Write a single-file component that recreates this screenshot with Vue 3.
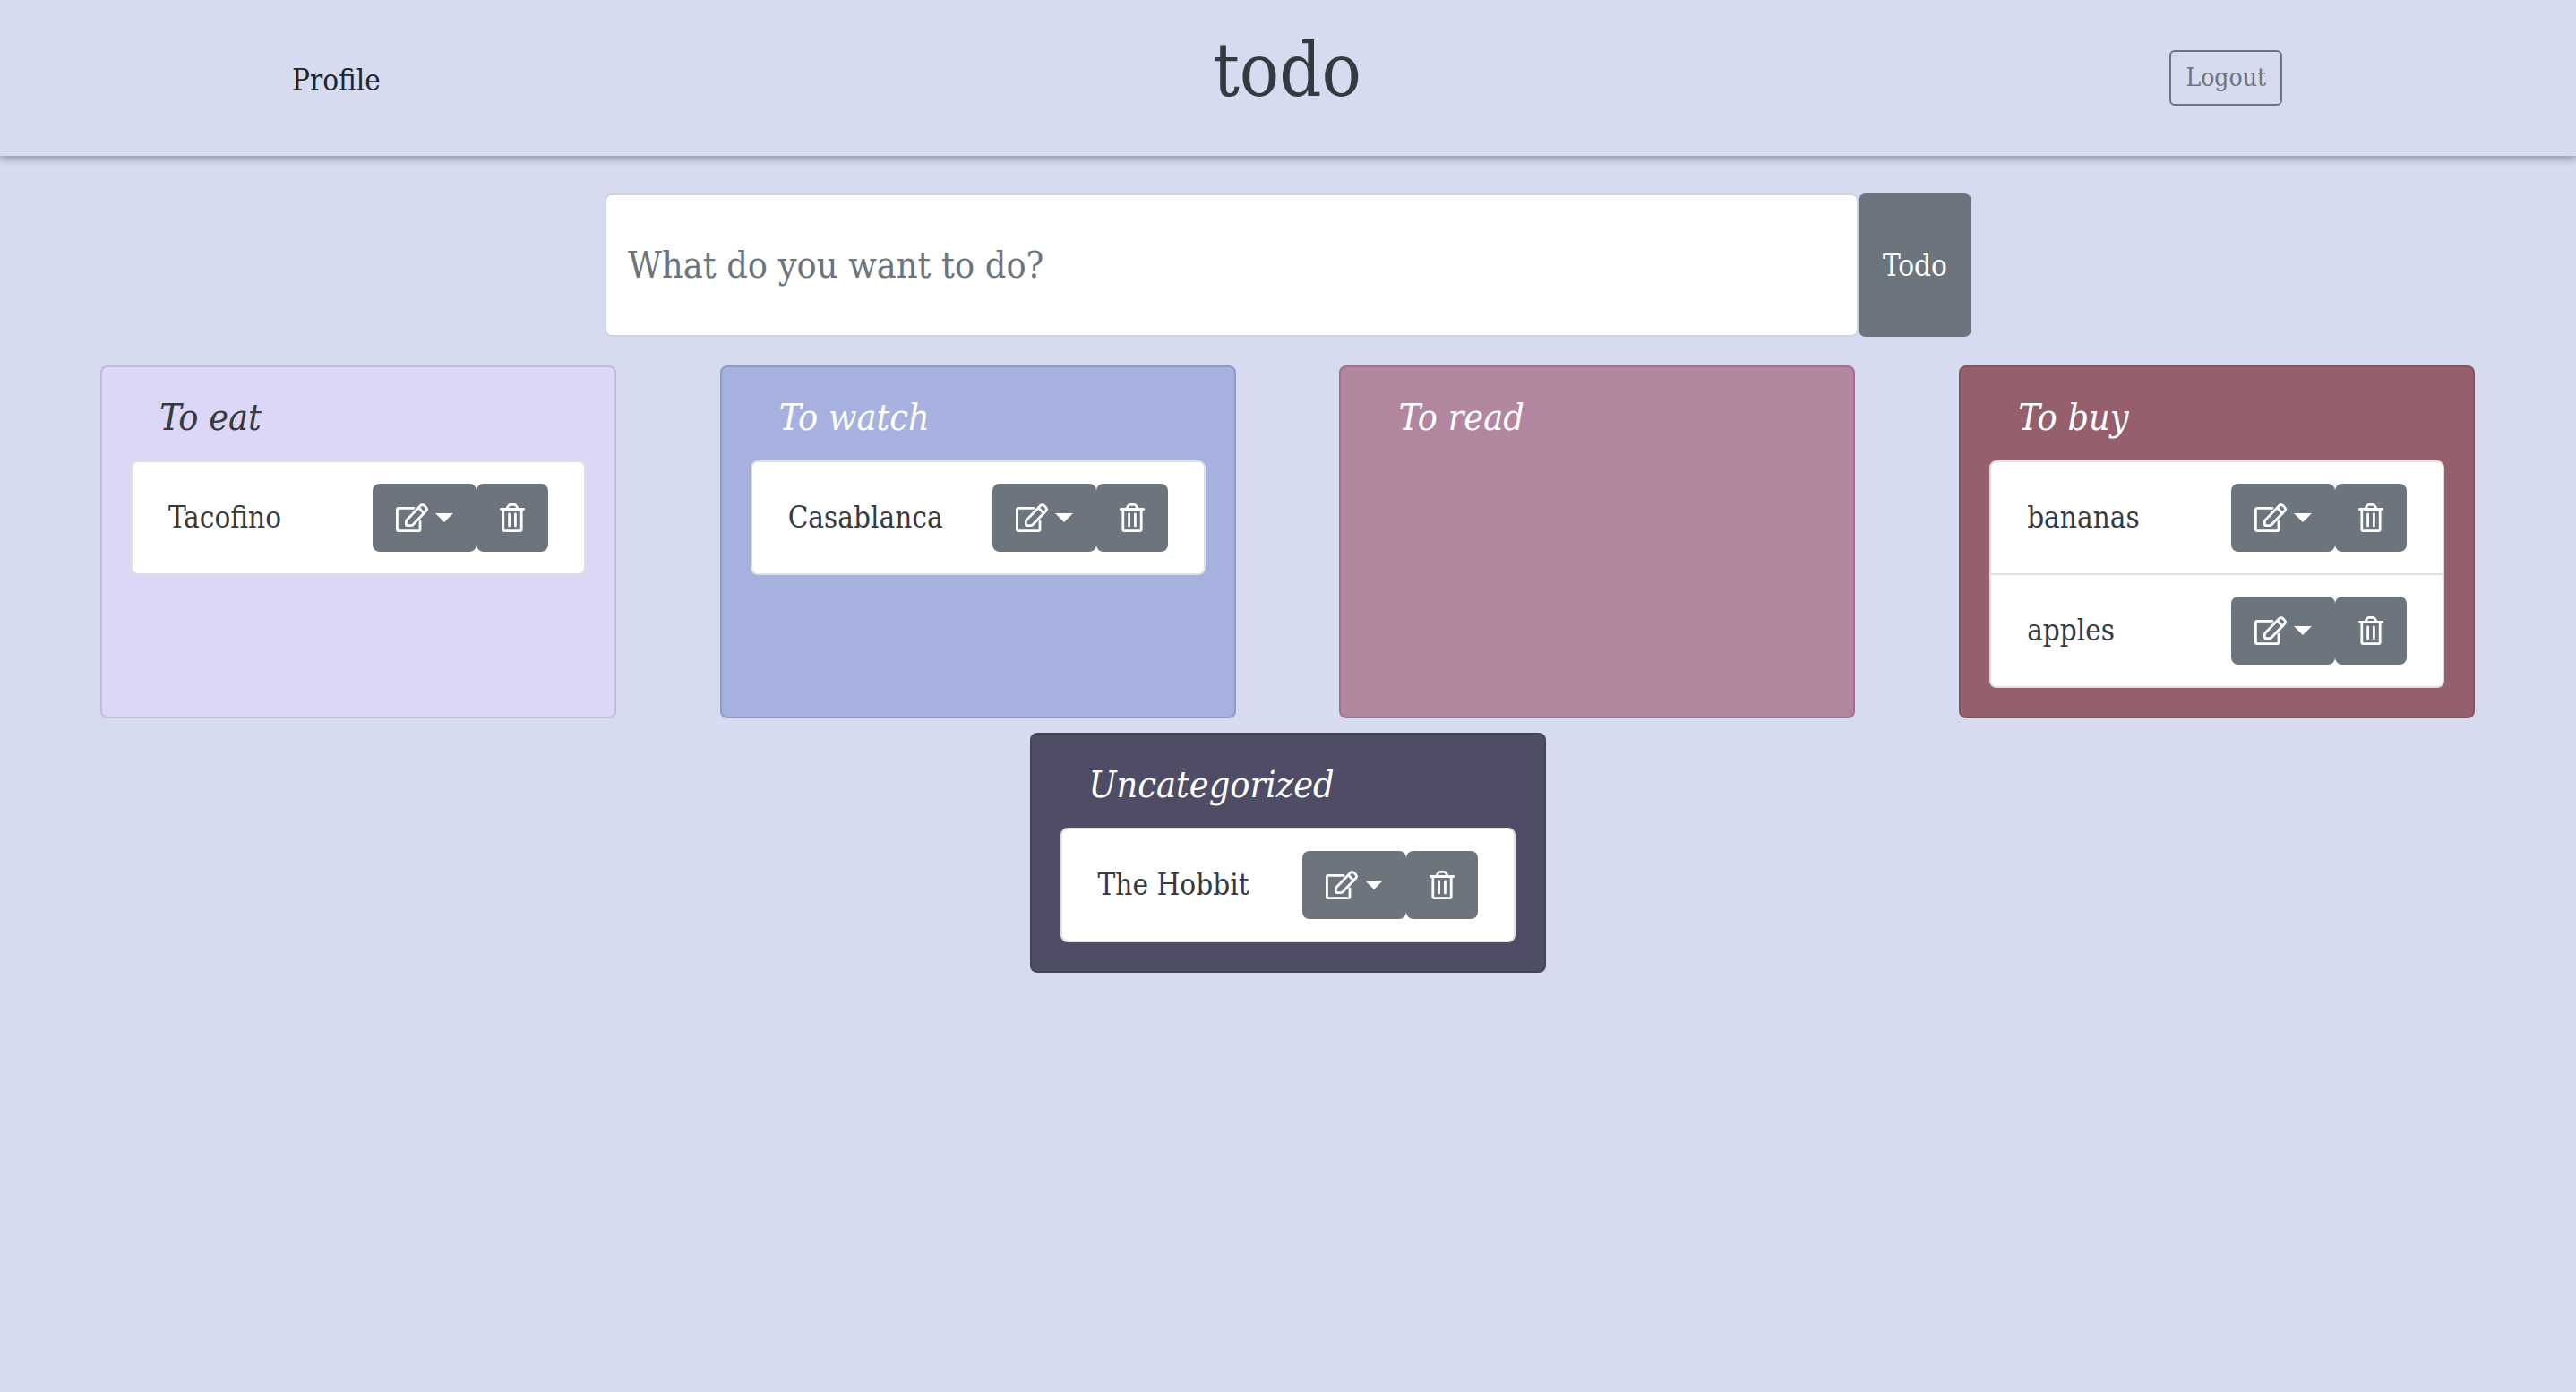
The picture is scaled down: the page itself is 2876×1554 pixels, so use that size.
<script setup>
import { ref } from 'vue'

const draft = ref('')

const categories = ref([
  { id: 'eat', title: 'To eat', items: ['Tacofino'] },
  { id: 'watch', title: 'To watch', items: ['Casablanca'] },
  { id: 'read', title: 'To read', items: [] },
  { id: 'buy', title: 'To buy', items: ['bananas', 'apples'] },
  { id: 'other', title: 'Uncategorized', items: ['The Hobbit'] },
])

function addTodo() {
  const text = draft.value.trim()
  if (!text) return
  categories.value[4].items.push(text)
  draft.value = ''
}

function removeTodo(category, index) {
  category.items.splice(index, 1)
}
</script>

<template>
  <div class="page">
    <header class="top-bar">
      <a class="profile" href="#profile">Profile</a>
      <h1 class="brand">todo</h1>
      <button class="logout" type="button">Logout</button>
    </header>

    <main>
      <form class="new-todo" @submit.prevent="addTodo">
        <input
          v-model="draft"
          class="new-todo-input"
          type="text"
          aria-label="New todo"
          placeholder="What do you want to do?"
        />
        <button class="new-todo-button" type="submit">Todo</button>
      </form>

      <div class="board">
        <section
          v-for="category in categories"
          :key="category.id"
          class="card"
          :class="category.id"
        >
          <h2 class="card-title">{{ category.title }}</h2>
          <ul v-if="category.items.length" class="list">
            <li v-for="(item, index) in category.items" :key="item" class="item">
              <span>{{ item }}</span>
              <div class="actions">
                <button class="action" type="button" :aria-label="'Edit ' + item">
                  <svg width="36" height="32" viewBox="0 0 36 32" class="icon">
                    <path d="M20 5.4H3Q1.4 5.4 1.4 7V29Q1.4 30.6 3 30.6H25.4Q27 30.6 27 29V20" />
                    <path d="M11.9 18.8 27.6 2.5Q29.8.5 31.9 2.6L33.6 4.4Q35.5 6.5 33.6 8.5L19 23.8Q18 24.6 16.6 24.6H12.7Q11.4 24.6 11.4 23.3V20.4Q11.4 19.4 11.9 18.8Z" />
                    <path d="M25.5 5 31.4 11.2" />
                  </svg>
                  <span class="caret"></span>
                </button>
                <button
                  class="action"
                  type="button"
                  :aria-label="'Delete ' + item"
                  @click="removeTodo(category, index)"
                >
                  <svg width="28" height="32" viewBox="0 0 28 32" class="icon">
                    <path d="M1.4 6.5H26.6" />
                    <path d="M7.8 6 9.7 2.6Q10.4 1.4 11.7 1.4H16.3Q17.6 1.4 18.3 2.6L20.2 6" />
                    <path d="M3.8 6.5V29Q3.8 30.6 5.4 30.6H22.6Q24.2 30.6 24.2 29V6.5" />
                    <path d="M10.6 12V25M17.4 12V25" />
                  </svg>
                </button>
              </div>
            </li>
          </ul>
        </section>
      </div>
    </main>
  </div>
</template>

<style>
body {
  background: #d6dbef;
}
</style>

<style scoped>
* {
  box-sizing: border-box;
}

.page {
  color: #343a40;
  font-family: 'Roboto Slab', 'DejaVu Serif Condensed', 'DejaVu Serif', serif;
  font-size: 33px;
  line-height: 48px;
}

button,
input {
  margin: 0;
  font-family: inherit;
}

button {
  cursor: pointer;
}

.top-bar {
  display: grid;
  grid-template-columns: 1fr auto 1fr;
  align-items: center;
  height: 174px;
  padding: 0 328px 0 326px;
  box-shadow: 0 4px 8px rgba(0, 0, 0, 0.3);
}

.profile {
  justify-self: start;
  padding-top: 6px;
  color: #212529;
  text-decoration: none;
}

.brand {
  margin: 0;
  padding-bottom: 16px;
  font-size: 82px;
  font-weight: 400;
  line-height: 96px;
}

.logout {
  justify-self: end;
  padding: 8px 16px;
  border: 2px solid #6c757d;
  border-radius: 6px;
  background: transparent;
  color: #6c757d;
  font-size: 28px;
  line-height: 42px;
}

.new-todo {
  display: flex;
  width: min(1526px, 100%);
  height: 160px;
  margin: 42px auto 32px;
}

.new-todo-input {
  flex: 1;
  min-width: 0;
  padding: 0 24px;
  border: 2px solid #ced4da;
  border-radius: 8px;
  background: #fff;
  color: #495057;
  font-size: 41px;
}

.new-todo-input::placeholder {
  color: #6c757d;
  opacity: 1;
}

.new-todo-button {
  width: 126px;
  padding: 0;
  border: 0;
  border-radius: 8px;
  background: #6c757d;
  color: #fff;
  font-size: 33px;
}

.board {
  display: flex;
  flex-wrap: wrap;
  justify-content: space-around;
  gap: 16px 0;
  padding: 0 55px 0 54px;
}

.card {
  width: 576px;
  padding: 32px;
  border: 2px solid rgba(0, 0, 0, 0.125);
  border-radius: 8px;
  color: #fff;
}

.eat {
  background: #dcd7f6;
  color: #343a40;
}

.watch {
  background: #a6b1e0;
}

.read {
  background: #b2869f;
}

.buy {
  background: #965f6d;
}

.other {
  background: #4e4d65;
}

.card-title {
  margin: 0 0 24px;
  padding-left: 32px;
  font-size: 41px;
  font-style: italic;
  font-weight: 400;
  line-height: 48px;
}

.list {
  margin: 0;
  padding: 0;
  overflow: hidden;
  border: 2px solid #dfdfdf;
  border-radius: 8px;
  background: #fff;
  color: #343a40;
  list-style: none;
}

.item {
  display: flex;
  align-items: center;
  justify-content: space-between;
  padding: 24px 40px;
}

.item + .item {
  border-top: 2px solid #dfdfdf;
}

.actions {
  display: flex;
}

.action {
  display: flex;
  align-items: center;
  gap: 8px;
  height: 76px;
  padding: 0 26px;
  border: 0;
  border-radius: 8px;
  background: #6c757d;
  color: #fff;
}

.icon {
  display: block;
  fill: none;
  stroke: currentColor;
  stroke-width: 2.8;
  stroke-linecap: round;
  stroke-linejoin: round;
}

.caret {
  border-top: 10px solid;
  border-right: 10px solid transparent;
  border-left: 10px solid transparent;
}
</style>
